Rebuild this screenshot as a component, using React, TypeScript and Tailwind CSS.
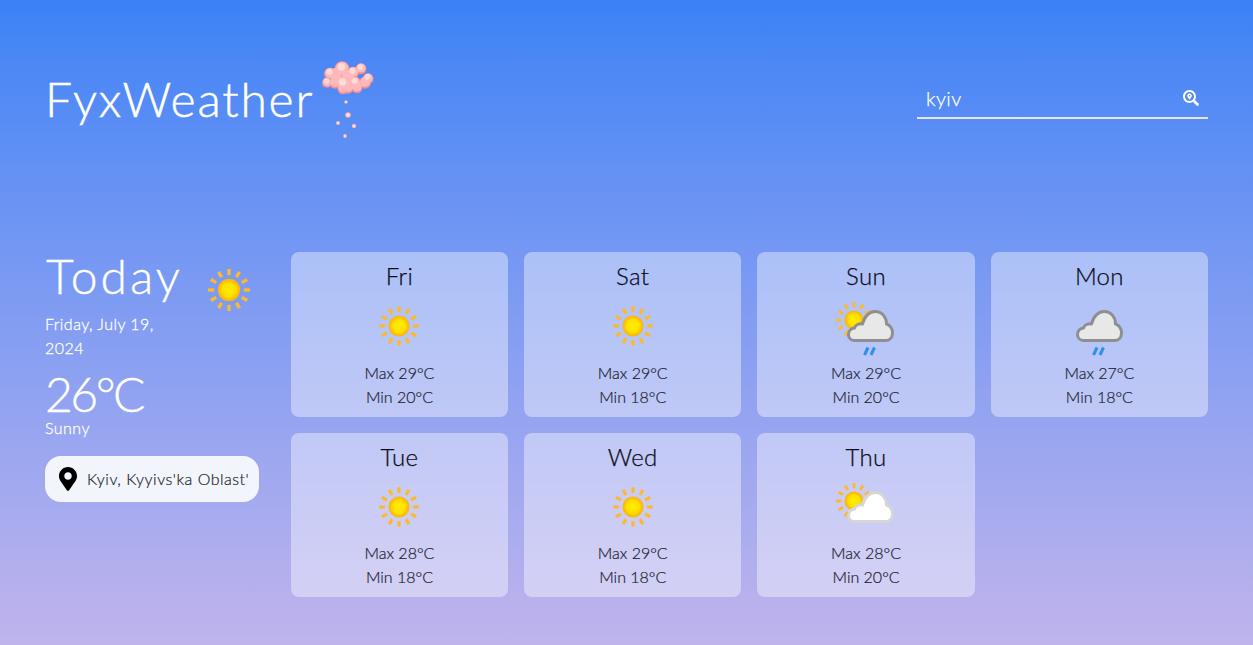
import React from "react";
import { FaMapMarkerAlt, FaSearchLocation } from "react-icons/fa";

type IconKind = "sun" | "sunRain" | "rain" | "sunCloud";

type DayForecast = {
  day: string;
  max: number;
  min: number;
  icon: IconKind;
};

const days: DayForecast[] = [
  { day: "Fri", max: 29, min: 20, icon: "sun" },
  { day: "Sat", max: 29, min: 18, icon: "sun" },
  { day: "Sun", max: 29, min: 20, icon: "sunRain" },
  { day: "Mon", max: 27, min: 18, icon: "rain" },
  { day: "Tue", max: 28, min: 18, icon: "sun" },
  { day: "Wed", max: 29, min: 18, icon: "sun" },
  { day: "Thu", max: 28, min: 20, icon: "sunCloud" },
];

const rayAngles = [0, 30, 60, 90, 120, 150, 180, 210, 240, 270, 300, 330];

function SunShape({ cx, cy, r }: { cx: number; cy: number; r: number }) {
  return (
    <g>
      <defs>
        <radialGradient id="sunCore">
          <stop offset="0%" stopColor="#ffee00" />
          <stop offset="62%" stopColor="#ffdf00" />
          <stop offset="80%" stopColor="#fec400" />
          <stop offset="100%" stopColor="#fbb016" />
        </radialGradient>
      </defs>
      {rayAngles.map((a) => (
        <rect
          key={a}
          x={cx - r * 0.15}
          y={cy - r * 1.88}
          width={r * 0.3}
          height={r * 0.55}
          fill="#fdb92d"
          transform={`rotate(${a} ${cx} ${cy})`}
        />
      ))}
      <circle cx={cx} cy={cy} r={r} fill="url(#sunCore)" />
    </g>
  );
}

function CloudShape({ stroke, fill }: { stroke: string; fill: string }) {
  return (
    <path
      d="M20.500 46.500C16.500 46.500 14.500 43.500 14.500 40.500C14.500 37 17 34.500 20.500 34C21.500 31 25 29 28.500 30C30.500 21.500 36 17.500 41 17.500C48 17.500 52.500 23 52.500 30C56.500 31 58.500 35.500 58.500 39C58.500 43.500 55.500 46.500 51.500 46.500Z"
      fill={fill}
      stroke={stroke}
      strokeWidth={3}
      strokeLinejoin="round"
    />
  );
}

function RainDrops() {
  return (
    <g stroke="#2f8ff0" strokeWidth={3}>
      <path d="M30.500 61l3.500-7.500" />
      <path d="M37 61l3.500-7.500" />
    </g>
  );
}

function WeatherIcon({ kind, className = "w-16 h-16" }: { kind: IconKind; className?: string }) {
  return (
    <svg viewBox="0 0 64 64" className={`${className} shrink-0`}>
      {kind === "sun" && <SunShape cx={32} cy={32} r={10.500} />}
      {(kind === "sunRain" || kind === "sunCloud") && <SunShape cx={20} cy={26} r={9.500} />}
      {kind === "sunRain" && (
        <>
          <CloudShape stroke="#8f8f8f" fill="#e8e8e8" />
          <RainDrops />
        </>
      )}
      {kind === "rain" && (
        <g transform="translate(-4 0)">
          <CloudShape stroke="#8f8f8f" fill="#e8e8e8" />
          <RainDrops />
        </g>
      )}
      {kind === "sunCloud" && <CloudShape stroke="#d6d6d6" fill="#ffffff" />}
    </svg>
  );
}

const puffs = [
  [27, 9, 7.500],
  [15, 14, 6],
  [46, 9, 5.500],
  [38, 13, 6],
  [53, 19, 5.500],
  [28, 24, 7.500],
  [12, 23, 5],
  [40, 23, 6],
  [50, 23, 6],
  [20, 23, 6],
  [33, 28, 6],
  [28, 29, 5.500],
  [42, 28, 5.500],
  [21, 15, 7],
  [33, 17, 7],
];

const sparkles = [
  [31, 43, 1.800],
  [33, 56, 2.800],
  [23, 64, 2],
  [39, 67, 2.200],
  [30, 77, 1.900],
];

function LogoCloud() {
  return (
    <svg viewBox="0 0 60 84" className="w-[60px] h-[84px] shrink-0 mt-[2px] ml-[1px]">
      <g fill="#f28e95">
        {puffs.map(([x, y, r]) => (
          <circle key={`o${x}-${y}`} cx={x} cy={y + 0.800} r={r} />
        ))}
      </g>
      <g fill="#ffb9ba">
        {puffs.map(([x, y, r]) => (
          <circle key={`m${x}-${y}`} cx={x} cy={y} r={r * 0.84} />
        ))}
      </g>
      <g fill="#ffdcd8">
        {puffs.slice(0, 8).map(([x, y, r]) => (
          <circle key={`h${x}-${y}`} cx={x - 0.500} cy={y - 1} r={r * 0.5} />
        ))}
      </g>
      {sparkles.map(([x, y, r]) => (
        <g key={`s${x}-${y}`}>
          <circle cx={x} cy={y} r={r} fill="#f9b4b6" />
          <circle cx={x} cy={y} r={r * 0.5} fill="#ffeae6" />
        </g>
      ))}
    </svg>
  );
}

function DayCard({ day, max, min, icon }: DayForecast) {
  return (
    <div className="h-[164.6px] rounded-lg bg-white/40 flex flex-col items-center pt-[8px]">
      <div className="text-2xl font-light leading-8 text-[#0c0c18] tracking-[0.3px] [-webkit-text-stroke:0.25px_#0c0c18]">{day}</div>
      <div className="mt-[2px]">
        <WeatherIcon kind={icon} />
      </div>
      <div className="text-base font-light leading-6 mt-[2.500px] text-[#1c1c30] [-webkit-text-stroke:0.2px_#1c1c30]">Max {max}°C</div>
      <div className="text-base font-light leading-6 text-[#1c1c30] [-webkit-text-stroke:0.2px_#1c1c30]">Min {min}°C</div>
    </div>
  );
}

export default function App() {
  return (
    <div className="h-[645px] w-full overflow-hidden bg-gradient-to-b from-[#3b82f6] to-[#c0b4ec] px-[45px] font-['Lato',sans-serif] text-white">
      {/* Header */}
      <div className="h-[252px] flex items-start justify-between">
        <div className="flex items-start pt-[57px]">
          <h1 className="text-5xl font-light leading-[84px] tracking-[1.8px] [-webkit-text-stroke:0.5px_white]">FyxWeather</h1>
          <LogoCloud />
        </div>
        <div className="w-[291px] mt-[80px] h-[39px] border-b-2 border-[#e5e7eb] flex items-center justify-between pl-[9px] pr-[9px] pb-[2px]">
          <span className="text-xl font-light tracking-[0.4px] [-webkit-text-stroke:0.25px_white]">kyiv</span>
          <FaSearchLocation className="w-4 h-4" />
        </div>
      </div>

      {/* Main */}
      <div className="flex gap-8">
        <div className="w-[213.8px] shrink-0">
          <div className="flex items-start h-[60px]">
            <span className="w-[149.5px] shrink-0 text-5xl font-light leading-[48px] pl-[1px] tracking-[3px] [-webkit-text-stroke:0.4px_white]">Today</span>
            <div className="mt-[4px]">
              <WeatherIcon kind="sun" className="w-[68px] h-[68px]" />
            </div>
          </div>
          <div className="w-[130px] text-base font-light leading-6 tracking-[0.45px] [-webkit-text-stroke:0.3px_white]">Friday, July 19, 2024</div>
          <div className="text-5xl font-light leading-[44px] mt-3 tracking-[-2.500px] [-webkit-text-stroke:0.4px_white]">26°C</div>
          <div className="text-base font-light leading-6 tracking-[0.45px] [-webkit-text-stroke:0.3px_white]">Sunny</div>
          <div className="mt-4 h-[46px] rounded-2xl bg-[#f3f5fc] flex items-center gap-[10px] pl-[14px] text-[#1c1c28]">
            <FaMapMarkerAlt className="w-[18px] h-6 text-black" />
            <span className="text-base font-light whitespace-nowrap tracking-[0.5px] [-webkit-text-stroke:0.2px_#1c1c28]">Kyiv, Kyyivs'ka Oblast'</span>
          </div>
        </div>
        <div className="flex-1 grid grid-cols-4 gap-4">
          {days.map((d) => (
            <DayCard key={d.day} {...d} />
          ))}
        </div>
      </div>
    </div>
  );
}
